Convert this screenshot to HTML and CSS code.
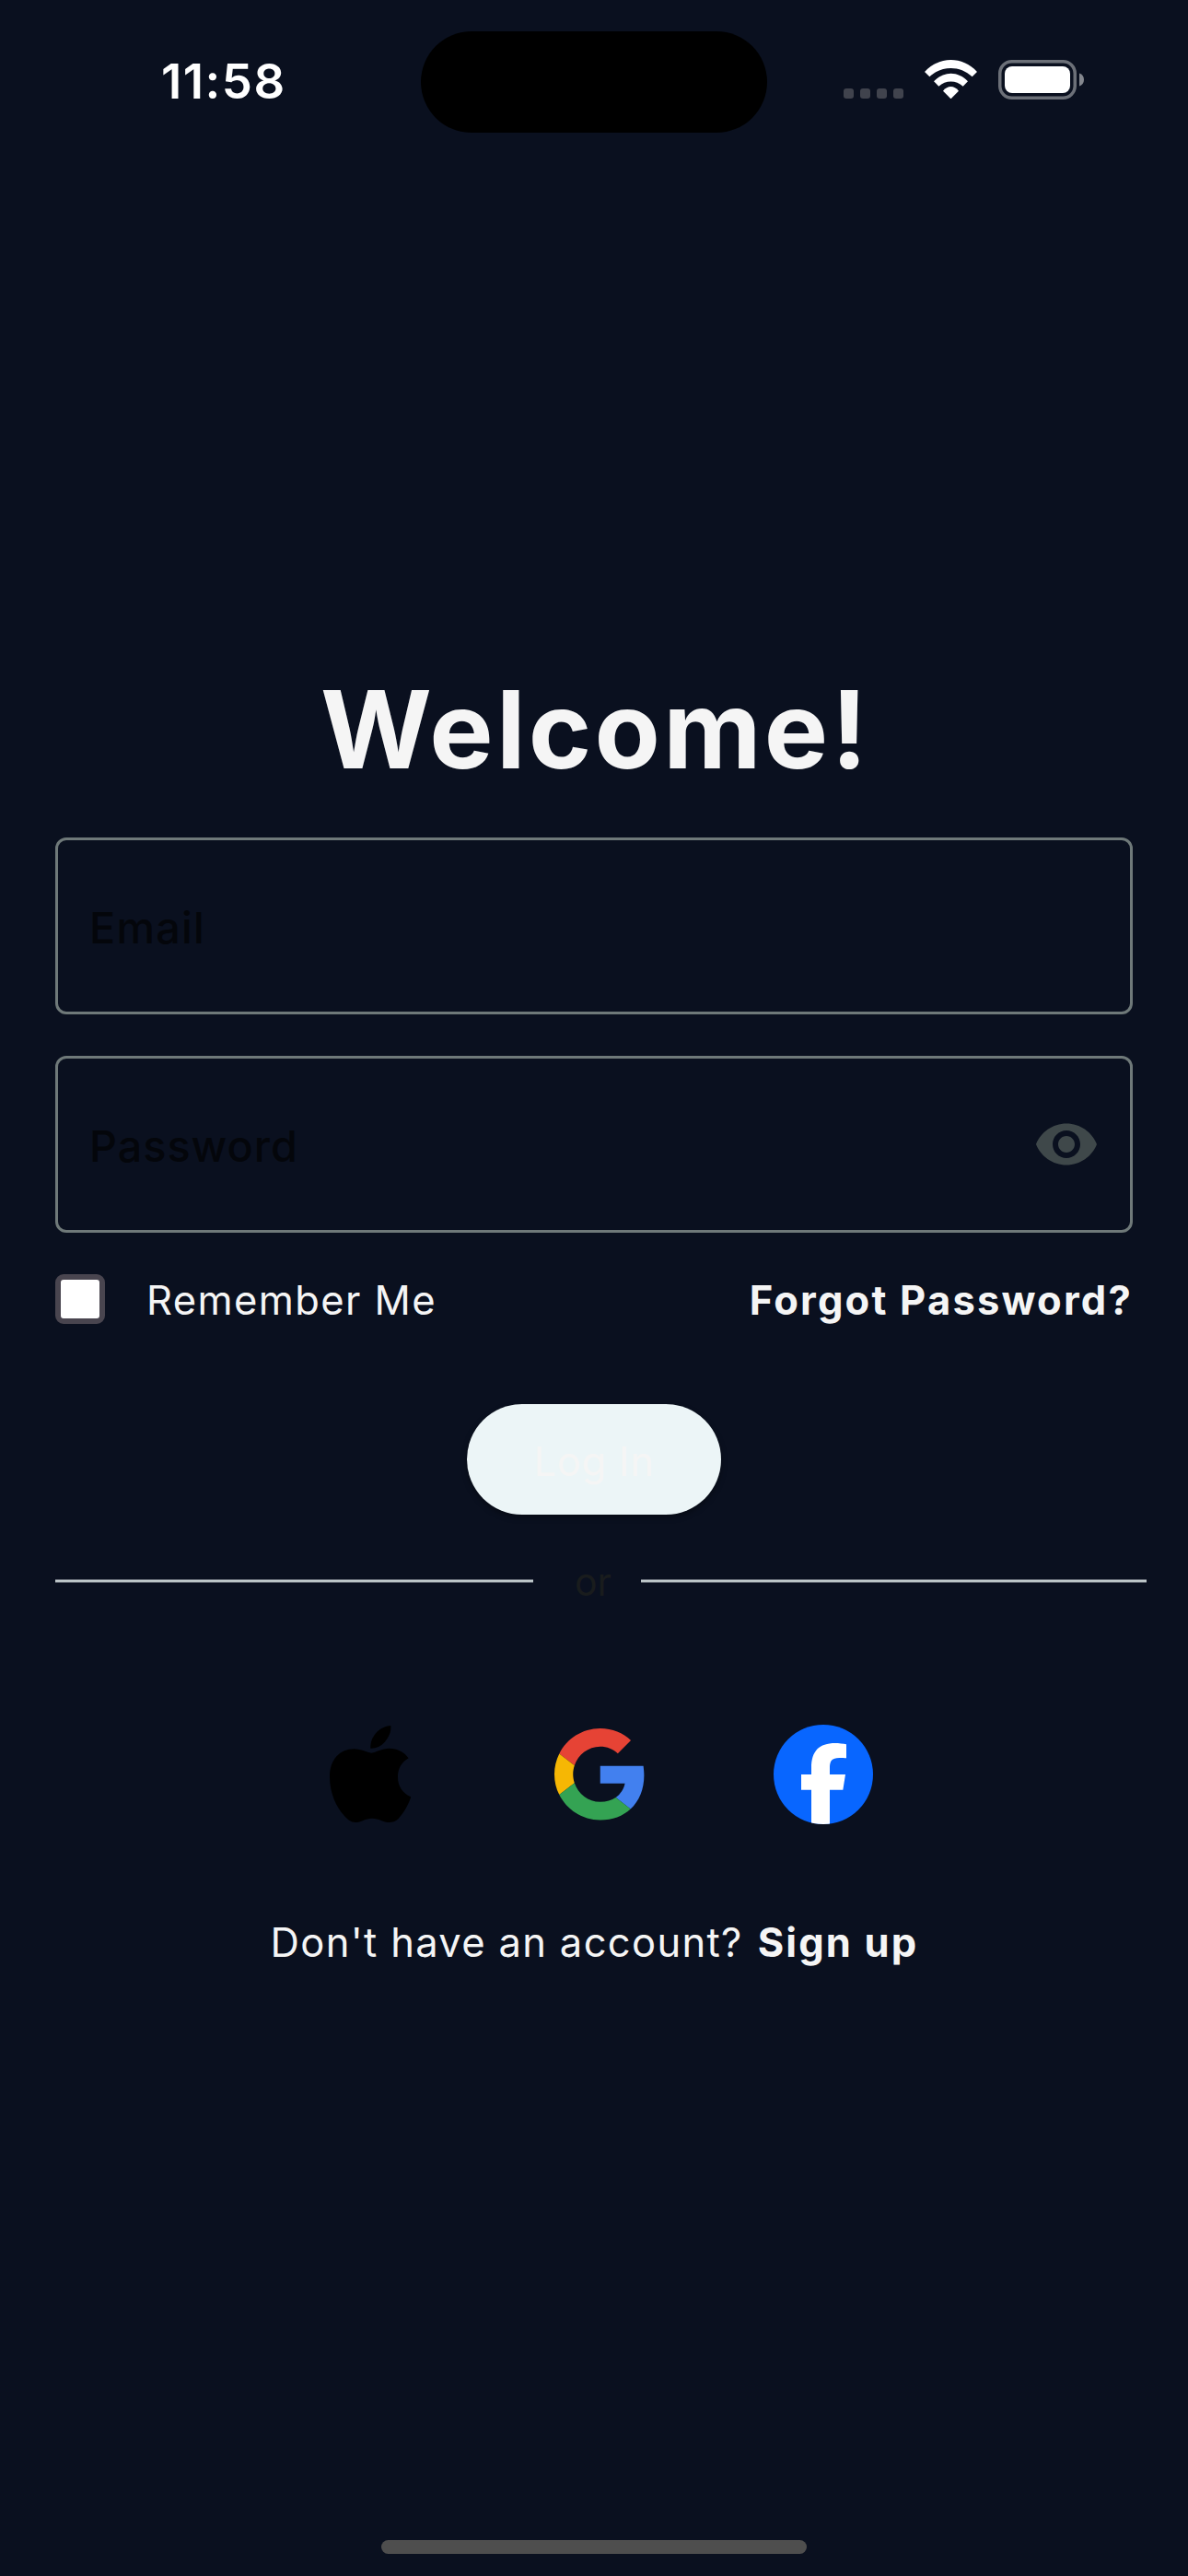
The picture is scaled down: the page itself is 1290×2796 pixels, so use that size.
FILE: index.html
```
<!DOCTYPE html>
<html lang="en">
<head>
<meta charset="utf-8">
<title>Log In</title>
<link rel="stylesheet" href="styles.css">
</head>
<body>
<header class="status-bar">
  <div class="time">11:58</div>
  <div class="island"></div>
  <div class="indicators">
    <div class="dots"><i></i><i></i><i></i><i></i></div>
    <svg class="wifi" viewBox="552 135 171 127" fill="#fff">
      <path d="M552 174C600 122.500 675 122.500 723 174L707 190C668 152.500 607 152.500 568 190Z"/>
      <path d="M582 205C614 170.500 661 170.500 693 205L677 221C655 200 620 200 598 221Z"/>
      <path d="M612 236C627 217.500 648 217.500 663 236L637.500 262Z"/>
    </svg>
    <svg class="battery" viewBox="0 0 93 43">
      <rect x="1.750" y="1.750" width="81.500" height="39.500" rx="13" fill="none" stroke="#6c7078" stroke-width="3.500"/>
      <rect x="7" y="7" width="71" height="29" rx="8" fill="#fff"/>
      <path d="M88 14.500C91 15.500 93 18 93 21.500C93 25 91 27.500 88 28.500Z" fill="#84878e"/>
    </svg>
  </div>
</header>
<main class="login">
  <h1 class="title">Welcome!</h1>
  <div class="field"><span class="label email-label">Email</span></div>
  <div class="field">
    <span class="label">Password</span>
    <svg class="eye" viewBox="0 0 24 24" fill="#3f484a"><path d="M12 4.500C7 4.500 2.730 7.610 1 12c1.730 4.390 6 7.500 11 7.500s9.270-3.110 11-7.500c-1.730-4.390-6-7.500-11-7.500zM12 17c-2.760 0-5-2.240-5-5s2.240-5 5-5 5 2.240 5 5-2.240 5-5 5zm0-8c-1.660 0-3 1.340-3 3s1.340 3 3 3 3-1.340 3-3-1.340-3-3-3z"/></svg>
  </div>
  <div class="options">
    <span class="checkbox"></span>
    <span class="remember">Remember Me</span>
    <a class="forgot">Forgot Password?</a>
  </div>
  <button class="submit">Log In</button>
  <div class="divider">
    <span class="line"></span>
    <span class="or">or</span>
    <span class="line"></span>
  </div>
  <div class="social">
    <svg class="apple" viewBox="83 70 265 316">
      <path d="M219 159C235 157 252 144 277 144C305 144 327 157 340 176C319 188 305 208 305 237C305 268 322 291 348 302C338 332 322 356 307 373C297 383 287 385 277 385C258 385 244 372 221 372C198 372 186 385 167 385C152 385 142 376 131 364C103 334 83 287 83 237C83 180 117 146 162 146C187 146 204 158 219 159Z"/>
      <path d="M282 70C284 90 276 107 262 124C249 138 233 145 216 144C215 124 222 108 234 94C247 79 263 72 282 70Z"/>
    </svg>
    <svg class="google" viewBox="0 0 48 48">
      <path fill="#e64335" d="M24 9.500c3.540 0 6.710 1.220 9.210 3.600l6.850-6.850C35.900 2.380 30.470 0 24 0 14.620 0 6.510 5.380 2.560 13.220l7.980 6.190C12.430 13.720 17.740 9.500 24 9.500z"/>
      <path fill="#4280ef" d="M46.980 24.550c0-1.570-.15-3.090-.38-4.950H24v9.200h12.940c-.58 2.960-2.260 5.480-4.780 7.400l7.730 6c4.510-4.180 7.090-10.360 7.090-17.650z"/>
      <path fill="#f6b704" d="M10.530 28.590c-.48-1.450-.76-2.990-.76-4.590s.27-3.140.76-4.590l-7.980-6.190C.92 16.460 0 20.120 0 24c0 3.880.92 7.540 2.560 10.780l7.970-6.190z"/>
      <path fill="#34a353" d="M24 48c6.480 0 11.930-2.130 15.890-5.810l-7.730-6c-2.150 1.450-4.920 2.300-8.160 2.300-6.260 0-11.570-4.220-13.470-9.910l-7.980 6.190C6.510 42.620 14.620 48 24 48z"/>
    </svg>
    <svg class="facebook" viewBox="330 66 324 324">
      <clipPath id="disc"><circle cx="492" cy="228" r="162"/></clipPath>
      <circle cx="492" cy="228" r="162" fill="#0866ff"/>
      <path clip-path="url(#disc)" fill="#fff" d="M453 390V278H420V228H453V207C453 152 478 126 531 126C541 126 558 128 567 130V175C562 174.500 553 174 544 174C520 174 513 184 513 206V228H564L556 278H513V390Z"/>
    </svg>
  </div>
  <p class="signup"><span class="question">Don't have an account?</span><a class="signup-link">Sign up</a></p>
</main>
<div class="home-indicator"></div>
</body>
</html>
```
FILE: styles.css
```
* {
  box-sizing: border-box;
}

body {
  margin: 0;
  height: 2796px;
  display: flex;
  flex-direction: column;
  overflow: hidden;
  background: #0a101f;
  color: #f5f5f5;
  font-family: Inter, "Liberation Sans", sans-serif;
}

svg {
  display: block;
  flex: none;
}

.status-bar {
  display: grid;
  grid-template-columns: 457px 376px 457px;
  height: 178px;
}

.time {
  padding-left: 175px;
  color: #fff;
  font-size: 52.7px;
  font-weight: 600;
  line-height: 177px;
  letter-spacing: 1.5px;
}

.island {
  height: 110px;
  margin-top: 34px;
  border-radius: 55px;
  background: #000;
}

.indicators {
  display: flex;
  align-items: flex-start;
  gap: 23px;
  padding: 65px 0 0 83px;
}

.dots {
  display: flex;
  gap: 7px;
  margin-top: 31px;
}

.dots i {
  width: 11px;
  height: 11px;
  border-radius: 3px;
  background: #40434d;
}

.wifi {
  width: 57px;
  height: 42.3px;
}

.battery {
  width: 93px;
  height: 43px;
}

.login {
  display: flex;
  flex-direction: column;
  padding: 544px 60px 0;
}

.title {
  margin: 0 0 47px;
  padding-left: 3px;
  font-size: 116.5px;
  font-weight: 700;
  line-height: 140px;
  letter-spacing: 3.25px;
  text-align: center;
}

.field {
  display: flex;
  align-items: center;
  justify-content: space-between;
  height: 192px;
  margin-bottom: 45px;
  padding: 0 33px;
  border: 3px solid #6f7979;
  border-radius: 12px;
}

.label {
  padding: 4px 0 0 1px;
  color: #04060b;
  font-size: 46.8px;
  font-weight: 500;
  letter-spacing: 0.95px;
}

.email-label {
  letter-spacing: 1.2px;
}

.eye {
  width: 72px;
  height: 72px;
}

.options {
  display: flex;
  align-items: center;
  height: 54px;
  font-size: 43.5px;
  line-height: 57px;
}

.checkbox {
  width: 54px;
  height: 54px;
  border: 6px solid #49454f;
  border-radius: 9px;
  background: #fff;
}

.remember {
  margin-left: 45px;
  padding-top: 3px;
  letter-spacing: 1.4px;
}

.forgot {
  margin-left: auto;
  padding-top: 3px;
  font-weight: 700;
  letter-spacing: 2.2px;
}

.submit {
  align-self: center;
  width: 276px;
  height: 120px;
  margin-top: 87px;
  padding: 3px 0 0;
  border: 0;
  border-radius: 60px;
  background: #ecf5f7;
  box-shadow: 0 3px 6px rgba(0, 0, 0, 0.35);
  color: #f5f5f5;
  font: 400 43.5px Inter, "Liberation Sans", sans-serif;
  letter-spacing: 0.7px;
}

.divider {
  display: grid;
  grid-template-columns: 519px 117px 549px;
  align-items: center;
  height: 60px;
  margin-top: 42px;
}

.line {
  height: 4px;
  background: linear-gradient(#656b75 25%, #bfc8ca 25%, #bfc8ca 75%, #656b75 75%);
}

.or {
  padding: 2px 0 0 45px;
  color: #191c1d;
  font-size: 41px;
  line-height: 58px;
}

.social {
  display: flex;
  align-items: center;
  height: 108px;
  margin-top: 126px;
  padding-left: 297.7px;
}

.apple {
  width: 88.3px;
  height: 105.3px;
}

.google {
  width: 99.5px;
  height: 99.5px;
  margin-left: 156px;
}

.facebook {
  width: 108px;
  height: 108px;
  margin-left: 138.5px;
}

.signup {
  display: flex;
  margin: 98px 0 0;
  padding-left: 233.5px;
  font-size: 43.5px;
  line-height: 60px;
}

.question {
  letter-spacing: 1.33px;
}

.signup-link {
  margin-left: 16px;
  font-weight: 700;
  letter-spacing: 2.15px;
}

.home-indicator {
  width: 462px;
  height: 15px;
  margin: auto auto 24px;
  border-radius: 7.5px;
  background: #4e4e4e;
}
```
